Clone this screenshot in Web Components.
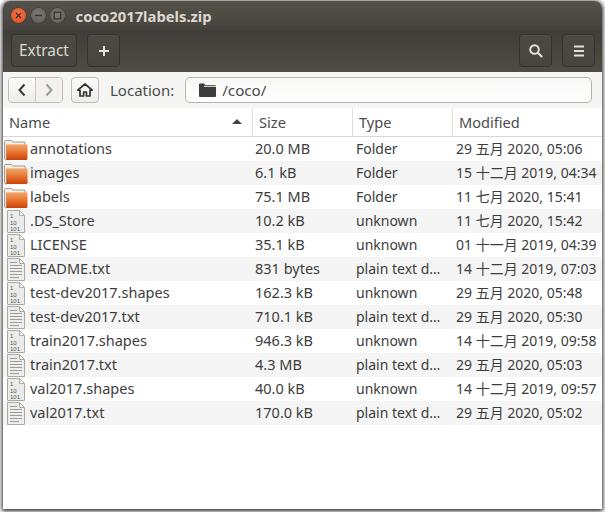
<!DOCTYPE html>
<html>
<head>
<meta charset="utf-8">
<style>
html,body{margin:0;padding:0;background:#fff;}
body{width:605px;height:512px;overflow:hidden;font-family:"Noto Sans","Noto Sans CJK SC",sans-serif;}
</style>
</head>
<body>
<archive-window>
  <title-bar title="coco2017labels.zip"></title-bar>
  <head-bar></head-bar>
  <location-bar path="/coco/"></location-bar>
  <file-list></file-list>
</archive-window>

<script>
class ArchiveWindow extends HTMLElement{
    connectedCallback(){
        const shadow=this.attachShadow({mode:'open'});
        shadow.innerHTML=`<style>
            :host{display:block;width:599px;height:508px;margin:1px 0 0 3px;background:#fff;
                border-radius:7px 7px 0 0;box-shadow:0 1px 4px 1px rgba(0,0,0,.85);}
            .clip{height:100%;border-radius:7px 7px 0 0;overflow:hidden;display:flex;flex-direction:column;}
        </style><div class="clip"><slot></slot></div>`;
    }
}
customElements.define('archive-window',ArchiveWindow);

class TitleBar extends HTMLElement{
    connectedCallback(){
        const shadow=this.attachShadow({mode:'open'});
        shadow.innerHTML=`<style>
            :host{display:flex;align-items:center;height:29px;padding-left:8px;gap:4.5px;box-sizing:border-box;
                background:linear-gradient(#55524b,#46433e);}
            .btn{width:15px;height:15px;border-radius:50%;display:flex;align-items:center;justify-content:center;
                background:radial-gradient(circle at 50% 40%,#7d7b75,#5c5a54);box-shadow:0 0 0 .5px #37352f;}
            .close{background:radial-gradient(circle at 50% 40%,#f2764a,#dd4a1f);}
            h1{margin:0 0 0 6px;font-size:14.8px;font-weight:700;color:#dcd9d0;}
        </style>
        <span class="btn close"><svg width="9" height="9" viewBox="0 0 9 9"><path d="M2 2l5 5M7 2l-5 5" stroke="#4a2a1a" stroke-width="1.2"/></svg></span>
        <span class="btn"><svg width="9" height="9" viewBox="0 0 9 9"><path d="M1 4.5h7" stroke="#35332e" stroke-width="1.3"/></svg></span>
        <span class="btn"><svg width="9" height="9" viewBox="0 0 9 9"><rect x="1.2" y="1.2" width="6.6" height="6.6" fill="none" stroke="#35332e" stroke-width="1.2"/></svg></span>
        <h1></h1>`;
        shadow.querySelector('h1').textContent=this.getAttribute('title');
    }
}
customElements.define('title-bar',TitleBar);

class HeadBar extends HTMLElement{
    connectedCallback(){
        const shadow=this.attachShadow({mode:'open'});
        shadow.innerHTML=`<style>
            :host{display:flex;align-items:flex-start;height:42px;padding:4px 7px 0 8px;box-sizing:border-box;gap:10px;
                background:linear-gradient(#403e39,#4f4c45);}
            button{height:33px;box-sizing:border-box;border:1px solid #34322e;border-radius:4px;
                background:linear-gradient(#4b4943,#47453f);color:#dcd9d0;font:15.4px "Noto Sans",sans-serif;padding:0;
                display:flex;align-items:center;justify-content:center;box-shadow:inset 0 1px 0 rgba(255,255,255,.04);}
            .extract{width:66px;}
            .icon{width:33px;}
            .fill{flex:1;}
        </style>
        <button class="extract">Extract</button>
        <button class="icon"><svg width="12" height="12" viewBox="0 0 12 12"><path d="M6 1v10M1 6h10" stroke="#e4e1d9" stroke-width="2"/></svg></button>
        <span class="fill"></span>
        <button class="icon"><svg width="16" height="16" viewBox="0 0 16 16"><circle cx="6.5" cy="6.5" r="4.3" fill="none" stroke="#e4e1d9" stroke-width="1.9"/><path d="M9.8 9.8l4.4 4.2" stroke="#e4e1d9" stroke-width="2.2"/></svg></button>
        <button class="icon"><svg width="12" height="12" viewBox="0 0 12 12"><path d="M1 1.5h10M1 6h10M1 10.5h10" stroke="#e4e1d9" stroke-width="1.9"/></svg></button>`;
    }
}
customElements.define('head-bar',HeadBar);

class LocationBar extends HTMLElement{
    connectedCallback(){
        const shadow=this.attachShadow({mode:'open'});
        shadow.innerHTML=`<style>
            :host{display:flex;align-items:center;height:36px;padding:0 10px 1px 5px;box-sizing:border-box;background:#f5f5f3;
                font:15px "Noto Sans",sans-serif;color:#4c4c4c;}
            .nav{display:flex;height:26px;border:1px solid #bdbcb8;border-radius:4px;overflow:hidden;box-sizing:border-box;}
            .nav span{width:26px;display:flex;align-items:center;justify-content:center;background:linear-gradient(#fbfbfa,#eeedeb);}
            .nav span+span{border-left:1px solid #c9c8c4;background:#f2f1ef;}
            .home{width:28px;height:26px;margin-left:8px;box-sizing:border-box;border:1px solid #bdbcb8;border-radius:4px;
                background:linear-gradient(#fbfbfa,#eeedeb);display:flex;align-items:center;justify-content:center;}
            label{margin:0 11px 0 11px;}
            .entry{flex:1;height:26px;box-sizing:border-box;border:1px solid #b5b4b0;border-radius:5px;background:linear-gradient(#f7f7f6,#fff);
                display:flex;align-items:center;padding-left:13px;gap:6px;font-size:15.2px;}
        </style>
        <div class="nav">
            <span><svg width="10" height="14" viewBox="0 0 10 14"><path d="M7.5 1.5L2.5 7l5 5.5" fill="none" stroke="#3a3a3a" stroke-width="2"/></svg></span>
            <span><svg width="10" height="14" viewBox="0 0 10 14"><path d="M2.5 1.5l5 5.5-5 5.5" fill="none" stroke="#9a9a98" stroke-width="2"/></svg></span>
        </div>
        <div class="home"><svg width="16" height="14" viewBox="0 0 16 14"><path d="M8 1L.8 7.2h2.2V13h3.6V9h2.8v4H13V7.2h2.2z" fill="none" stroke="#333" stroke-width="1.7" stroke-linejoin="round"/></svg></div>
        <label>Location:</label>
        <div class="entry">
            <svg width="17" height="14" viewBox="0 0 17 14"><path d="M0 1.5Q0 .5 1 .5h4l1.5 1.5H16q1 0 1 1V13q0 1-1 1H1q-1 0-1-1z" fill="#3c3c3c"/><path d="M5 3.3h12" stroke="#f5f5f5"/></svg>
            <span class="path"></span>
        </div>`;
        shadow.querySelector('.path').textContent=this.getAttribute('path');
    }
}
customElements.define('location-bar',LocationBar);

// one svg per kind of file, repeated on every row
const ICONS={
    folder:`<svg width="25" height="24" viewBox="0 0 25 24"><defs><linearGradient id="f" x1="0" y1="0" x2="0" y2="1"><stop offset="0" stop-color="#f3a76c"/><stop offset=".5" stop-color="#e6752e"/><stop offset="1" stop-color="#c9420d"/></linearGradient></defs>
        <path d="M1.5 4.5Q1.5 3.5 2.5 3.5h6l1.5 1.5h12v3H3.5V23H3q-1.5 0-1.5-1.5z" fill="#f1ece4" stroke="#a8998c"/><path d="M3.5 7.5H24.5V21.5q0 1.5-1.500 1.5H3.5z" fill="url(#f)"/><path d="M3.5 7.5h18" stroke="#f6c08e"/></svg>`,
    binary:`<svg width="25" height="24" viewBox="0 0 25 24"><path d="M4.5 1.5h12l5 5V23.5h-17z" fill="#ebebe9" stroke="#a9a9a6"/><path d="M16.5 1.5V6.5h5z" fill="#fafafa" stroke="#a9a9a6"/>
        <text x="7" y="9" font-size="6" fill="#555" font-family="Liberation Sans">1</text><text x="7" y="15.5" font-size="6" fill="#555" font-family="Liberation Sans">10</text><text x="7" y="22" font-size="6" fill="#555" font-family="Liberation Sans">101</text></svg>`,
    text:`<svg width="25" height="24" viewBox="0 0 25 24"><path d="M4.5 1.5h12l5 5V23.5h-17z" fill="#ededeb" stroke="#a9a9a6"/><path d="M16.5 1.5V6.5h5z" fill="#fafafa" stroke="#a9a9a6"/>
        <path d="M7 5.5h7M7 8.5h12M7 11.5h12M7 14.5h12M7 17.5h12M7 20.5h9" stroke="#9c9c9a"/></svg>`
};

class FileRow extends HTMLElement{
    connectedCallback(){
        const shadow=this.attachShadow({mode:'open'});
        shadow.innerHTML=`<style>
            :host{display:grid;grid-template-columns:250px 100px 100px 1fr;height:24px;align-items:center;font-size:14.5px;color:#3d3d3d;white-space:nowrap;}
            :host(:nth-child(even)){background:#f5f5f5;}
            .name{display:flex;align-items:center;height:24px;}
            .icon{width:27px;display:flex;}
            .label,.size,.type,.date{padding-bottom:2px;}
            .size{padding-left:2px;}
            .type{padding-left:3px;font-size:14px;}
            .date{padding-left:3px;font-size:14px;}
        </style>
        <div class="name"><span class="icon">${ICONS[this.getAttribute('kind')]}</span><span class="label"><slot></slot></span></div>
        <div class="size">${this.getAttribute('size')}</div>
        <div class="type">${this.getAttribute('type')}</div>
        <div class="date">${this.getAttribute('date')}</div>`;
    }
}
customElements.define('file-row',FileRow);

class FileList extends HTMLElement{
    connectedCallback(){
        const shadow=this.attachShadow({mode:'open'});
        shadow.innerHTML=`<style>
            :host{display:block;flex:1;background:#fff;}
            .head{display:grid;grid-template-columns:250px 100px 100px 1fr;height:29px;box-sizing:border-box;border-bottom:1px solid #d8d8d5;
                font-size:14.6px;color:#4c4c4c;}
            .head div{display:flex;align-items:center;padding-left:6px;border-right:1px solid #dededb;position:relative;}
            .head div:last-child{border-right:0;}
            .arrow{position:absolute;right:10px;top:11px;width:0;height:0;border:5px solid transparent;border-top:0;border-bottom:5px solid #444;}
        </style>
        <div class="head"><div>Name<span class="arrow"></span></div><div>Size</div><div>Type</div><div>Modified</div></div>
        <div class="rows"></div>`;
        const files=[
            ['folder','annotations','20.0 MB','Folder','29 五月 2020, 05:06'],
            ['folder','images','6.1 kB','Folder','15 十二月 2019, 04:34'],
            ['folder','labels','75.1 MB','Folder','11 七月 2020, 15:41'],
            ['binary','.DS_Store','10.2 kB','unknown','11 七月 2020, 15:42'],
            ['binary','LICENSE','35.1 kB','unknown','01 十一月 2019, 04:39'],
            ['text','README.txt','831 bytes','plain text d…','14 十二月 2019, 07:03'],
            ['binary','test-dev2017.shapes','162.3 kB','unknown','29 五月 2020, 05:48'],
            ['text','test-dev2017.txt','710.1 kB','plain text d…','29 五月 2020, 05:30'],
            ['binary','train2017.shapes','946.3 kB','unknown','14 十二月 2019, 09:58'],
            ['text','train2017.txt','4.3 MB','plain text d…','29 五月 2020, 05:03'],
            ['binary','val2017.shapes','40.0 kB','unknown','14 十二月 2019, 09:57'],
            ['text','val2017.txt','170.0 kB','plain text d…','29 五月 2020, 05:02']
        ];
        const rows=shadow.querySelector('.rows');
        files.forEach(f=>{
            let row=document.createElement('file-row');
            row.setAttribute('kind',f[0]);
            row.textContent=f[1];
            row.setAttribute('size',f[2]);
            row.setAttribute('type',f[3]);
            row.setAttribute('date',f[4]);
            rows.appendChild(row);
        });
    }
}
customElements.define('file-list',FileList);
</script>
</body>
</html>
